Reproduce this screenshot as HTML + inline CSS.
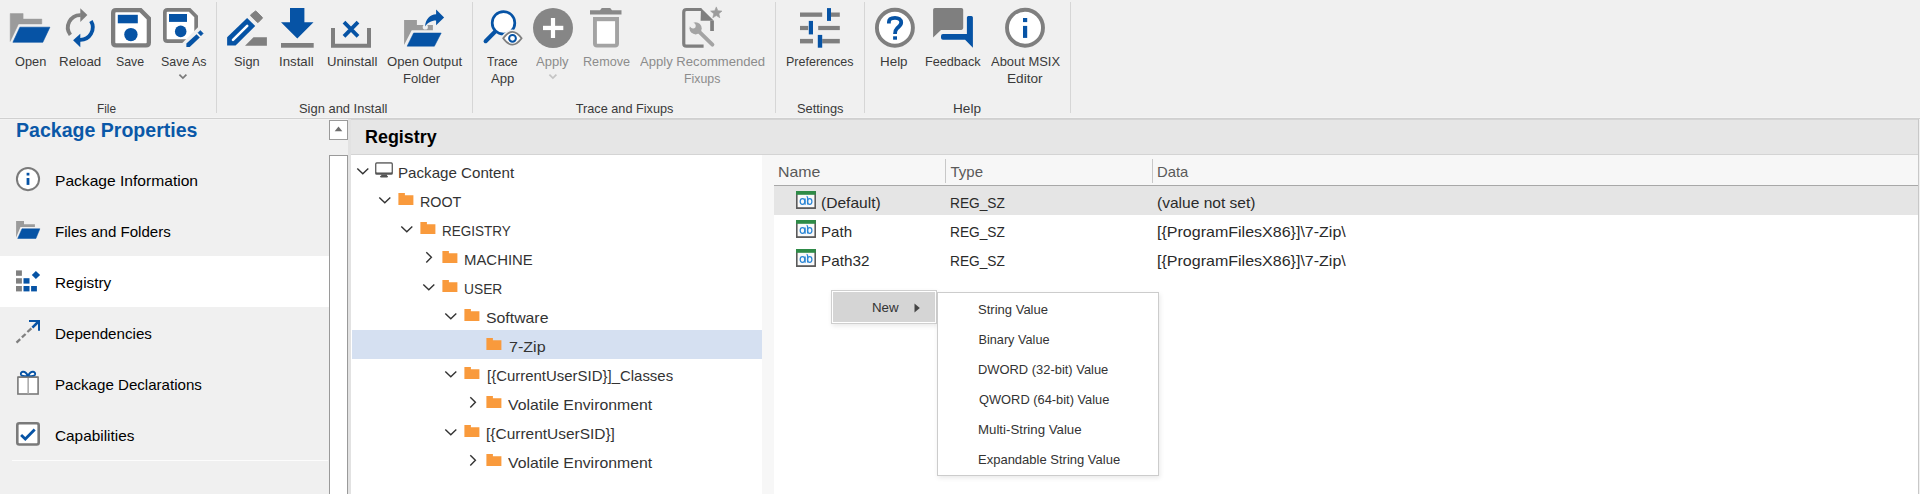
<!DOCTYPE html>
<html><head><meta charset="utf-8">
<style>
html,body{margin:0;padding:0;}
body{width:1920px;height:494px;overflow:hidden;position:relative;background:#f0f0f0;font-family:"Liberation Sans",sans-serif;}
.a{position:absolute;}
.t{position:absolute;white-space:nowrap;line-height:1;}
.rl{position:absolute;white-space:nowrap;line-height:17px;font-size:12.7px;color:#3a3a3a;text-align:center;width:200px;}
.gl{position:absolute;white-space:nowrap;line-height:1;font-size:12.7px;color:#3a3a3a;text-align:center;width:200px;}
.dis{color:#8a8a8a;}
.sep{position:absolute;top:2px;height:111px;width:1px;background:#d6d6d6;}
.nav{position:absolute;left:55.9px;font-size:15px;color:#000;line-height:1;white-space:nowrap;}
.tr{position:absolute;font-size:15px;color:#333;line-height:1;white-space:nowrap;}
.lv{position:absolute;font-size:15px;color:#1e1e1e;line-height:1;white-space:nowrap;}
.mi{position:absolute;left:42px;font-size:12.7px;color:#333;line-height:1;white-space:nowrap;}
.x{position:absolute;white-space:nowrap;line-height:1;transform-origin:0 0;}
</style></head><body>
<!-- ribbon bottom line -->
<div class="a" style="left:0;top:117px;width:1920px;height:1px;background:#f3f3f3"></div>
<div class="a" style="left:0;top:118px;width:1920px;height:1px;background:#d0d0d0"></div>
<div class="a" style="left:0;top:119px;width:1920px;height:1px;background:#f3f3f3"></div>
<!-- separators -->
<div class="sep" style="left:216px"></div>
<div class="sep" style="left:472px"></div>
<div class="sep" style="left:775px"></div>
<div class="sep" style="left:864px"></div>
<div class="sep" style="left:1070px"></div>

<!-- left panel selected row -->
<div class="a" style="left:0;top:256px;width:329px;height:51px;background:#fff"></div>
<div class="a" style="left:12px;top:460px;width:316px;height:1px;background:#fcfcfc"></div>
<!-- scrollbar -->
<div class="a" style="left:329px;top:120px;width:17px;height:18px;border:1px solid #9a9a9a;background:#fff"></div>
<div class="a" style="left:329px;top:155px;width:17px;height:400px;border:1px solid #9a9a9a;background:#fff"></div>
<div class="a" style="left:348px;top:119px;width:3px;height:375px;background:#e2e2e2"></div>
<!-- main header -->
<div class="a" style="left:351px;top:120px;width:1567px;height:34px;background:#e6e6e6"></div>
<div class="a" style="left:351px;top:119px;width:1567px;height:1px;background:#d4d4d4"></div>
<div class="a" style="left:351px;top:154px;width:1567px;height:1px;background:#d4d4d4"></div>
<!-- tree -->
<div class="a" style="left:351px;top:155px;width:411px;height:339px;background:#fff"></div>
<div class="a" style="left:352px;top:330px;width:410px;height:29px;background:#d5e0f1"></div>
<!-- splitter + list -->
<div class="a" style="left:762px;top:155px;width:1156px;height:30px;background:#f7f7f7"></div>
<div class="a" style="left:762px;top:185px;width:12px;height:309px;background:#f7f7f7"></div>
<div class="a" style="left:774px;top:185px;width:1144px;height:1px;background:#a8a8a8"></div>
<div class="a" style="left:774px;top:186px;width:1144px;height:308px;background:#fff"></div>
<div class="a" style="left:774px;top:186px;width:1144px;height:29px;background:#e5e5e5"></div>
<div class="a" style="left:945px;top:159px;width:1px;height:24px;background:#c8c8c8"></div>
<div class="a" style="left:1152px;top:159px;width:1px;height:24px;background:#c8c8c8"></div>
<div class="a" style="left:1918px;top:119px;width:1px;height:375px;background:#c8c8c8"></div>
<div class="a" style="left:1919px;top:119px;width:1px;height:375px;background:#f0f0f0"></div>

<!--ICONS-->
<svg class="a" style="left:0;top:0" width="1920" height="494" viewBox="0 0 1920 494">
<!-- Open -->
<path d="M10.2,13.6 H23.1 V19.1 H41.8 V23.9 H18.5 L10.2,41.4 Z" fill="#9b9b9b" stroke="#9b9b9b" stroke-width="0.5" stroke-linejoin="round"/>
<path d="M19.9,27.2 H49.9 L42.8,42.3 H12.9 Z" fill="#0653a5" stroke="#0653a5" stroke-width="0.6" stroke-linejoin="round"/>
<!-- Reload -->
<path d="M70.4,34.96 A12.4,12.4 0 0 1 80.8,15.1" fill="none" stroke="#7f7f7f" stroke-width="3.8"/>
<path d="M80.3,8.2 L87.4,15 L80.3,22 Z" fill="#7f7f7f"/>
<path d="M90.93,21.1 A12.4,12.4 0 0 1 79.8,39.9" fill="none" stroke="#0653a5" stroke-width="3.8"/>
<path d="M80.3,33.8 L73.1,40.3 L80.3,47.2 Z" fill="#0653a5"/>
<!-- Save -->
<path d="M116,10.15 H140.6 L148.85,18.4 V42.6 Q148.85,45.45 146,45.45 H116 Q113.15,45.45 113.15,42.6 V13 Q113.15,10.15 116,10.15 Z" fill="#fff" stroke="#7d7d7d" stroke-width="4.3"/>
<rect x="117.8" y="14.8" width="20" height="8.5" fill="#0653a5"/>
<circle cx="130.9" cy="34.6" r="6.7" fill="#0653a5"/>
<!-- Save As -->
<path d="M167.5,9.85 H189.6 L196.15,16.4 V38.6 Q196.15,41.15 193.6,41.15 H167.5 Q164.85,41.15 164.85,38.5 V12.5 Q164.85,9.85 167.5,9.85 Z" fill="#fff" stroke="#7d7d7d" stroke-width="3.7"/>
<rect x="169" y="14" width="18" height="7.9" fill="#0653a5"/>
<circle cx="180.7" cy="31.4" r="5.8" fill="#0653a5"/>
<path d="M200,25.3 V50 H175.3 Z" fill="#f0f0f0"/>
<path d="M186.4,46.9 V43.5 L196.6,34.2 L199.8,37.4 L189.7,46.9 Z" fill="#0653a5"/>
<path d="M198,32.8 L200.3,30.5 L203.2,33.4 L200.9,35.8 Z" fill="#0653a5" stroke="#0653a5" stroke-width="0.6" stroke-linejoin="round"/>
<!-- Sign -->
<path d="M227.1,45.4 V37.3 L247.1,18 L255.2,25.9 L235.6,45.4 Z" fill="#0653a5"/>
<path d="M233,39.9 L247.2,25.8" stroke="#fff" stroke-width="2.6" stroke-linecap="round"/>
<path d="M255.2,11.2 Q255.6,10.6 256.2,11.2 L262.2,17.2 Q262.8,17.8 262.2,18.4 L258.4,22.3 Q257.8,22.9 257.2,22.3 L250.8,15.9 Q250.2,15.3 250.8,14.7 Z" fill="#7f7f7f" stroke="#7f7f7f" stroke-width="0.9" stroke-linejoin="round"/>
<path d="M245,45.8 L253.5,37.2 H266.9 V45.8 Z" fill="#7f7f7f"/>
<!-- Install -->
<path d="M290,7.9 H304.4 V22.2 H313.5 L297.3,38.6 L281,22.2 H290 Z" fill="#0653a5"/>
<rect x="281" y="43" width="32.7" height="4.7" fill="#7f7f7f"/>
<!-- Uninstall -->
<path d="M333,28 V45.7 H369 V28" fill="none" stroke="#7f7f7f" stroke-width="4"/>
<path d="M344,22.1 L358,36.3 M358,22.1 L344,36.3" stroke="#0653a5" stroke-width="3.8"/>
<!-- Open Output Folder -->
<path d="M404.1,20.1 H416.9 V25 H432.9 V30.3 H411.7 L404.1,45 Z" fill="#9b9b9b"/>
<circle cx="425.3" cy="27" r="2.6" fill="#f0f0f0"/>
<path d="M425,26.5 C425.5,19 430,14.6 436.1,14.2 V9.6 L444.1,17.4 L436.1,25.2 V20.6 C431,20.6 427.5,23 425,26.5 Z" fill="#0653a5" stroke="#f0f0f0" stroke-width="1.6" paint-order="stroke"/>
<path d="M413.6,33 H441.2 L434.4,46.2 H407.1 Z" fill="#0653a5" stroke="#0653a5" stroke-width="0.5" stroke-linejoin="round"/>
<!-- Trace App -->
<path d="M496.5,30.3 L485.6,41.2" stroke="#0653a5" stroke-width="4.1" stroke-linecap="round"/>
<circle cx="503.5" cy="22.9" r="11.3" fill="#fff" stroke="#0653a5" stroke-width="2.7"/>
<path d="M503.2,38.3 Q512.4,25.5 521.6,38.3 Q512.4,51.1 503.2,38.3 Z" fill="#fff" stroke="#f0f0f0" stroke-width="5"/>
<path d="M503.2,38.3 Q512.4,25.5 521.6,38.3 Q512.4,51.1 503.2,38.3 Z" fill="#fff" stroke="#7f7f7f" stroke-width="1.8"/>
<circle cx="512.5" cy="38.3" r="3.4" fill="#fff" stroke="#0653a5" stroke-width="2"/>
<!-- Apply -->
<circle cx="553" cy="28" r="20" fill="#868686"/>
<rect x="543" y="25.8" width="20.3" height="4.3" fill="#fff"/>
<rect x="550.9" y="18" width="4.2" height="20" fill="#fff"/>
<!-- Remove -->
<path d="M590,10.3 H600 L601.8,7.9 H610.2 L612,10.3 H621.5 V14.6 H590 Z" fill="#898989"/>
<path d="M594.95,17 V43.5 Q594.95,45.65 597.1,45.65 H615 Q617.05,45.65 617.05,43.5 V17" fill="#fff" stroke="#a3a3a3" stroke-width="3.9"/>
<rect x="594.95" y="17" width="22.1" height="4.2" fill="#a3a3a3"/>
<!-- Apply Recommended Fixups -->
<path d="M703.6,46.2 H686.5 Q683.75,46.2 683.75,43.4 V12.3 Q683.75,9.5 686.5,9.5 H701.3" fill="none" stroke="#7f7f7f" stroke-width="3.2"/>
<path d="M701,7.9 L713.9,20.8 H700.6 Z" fill="#7f7f7f"/>
<rect x="710.2" y="20.8" width="3.7" height="10.2" fill="#7f7f7f"/>
<path d="M696,28.7 L712.4,44.7" stroke="#a4a4a4" stroke-width="3.9" stroke-linecap="round"/>
<circle cx="695.6" cy="28.3" r="6.1" fill="#a4a4a4"/>
<circle cx="693.1" cy="25.8" r="2.6" fill="#f0f0f0"/>
<path d="M693.1,25.8 L688,20.7" stroke="#f0f0f0" stroke-width="5.2"/>
<path d="M716.30,6.90 L717.89,10.72 L722.01,11.05 L718.87,13.73 L719.83,17.75 L716.30,15.60 L712.77,17.75 L713.73,13.73 L710.59,11.05 L714.71,10.72 Z" fill="#9c9c9c" stroke="#9c9c9c" stroke-width="0.6" stroke-linejoin="round"/>
<!-- Preferences -->
<g fill="#7f7f7f">
<rect x="800" y="12.5" width="22.2" height="4.3"/><rect x="831" y="12.5" width="8.8" height="4.3"/>
<rect x="800" y="25.9" width="8.2" height="4.2"/><rect x="818.2" y="25.9" width="21.6" height="4.2"/>
<rect x="800" y="38.9" width="13" height="4.5"/><rect x="822.2" y="38.9" width="17.6" height="4.5"/>
</g>
<g fill="#0653a5">
<rect x="827" y="8.1" width="4" height="12.8"/>
<rect x="808.8" y="20.9" width="4.2" height="13.5"/>
<rect x="817.8" y="34.9" width="4.4" height="12.8"/>
</g>
<!-- Help -->
<circle cx="894.9" cy="27.75" r="18" fill="#fff" stroke="#7f7f7f" stroke-width="3.9"/>
<path d="M888.9,23.6 V22 C888.9,18.8 891.6,17.8 895,17.8 C898.6,17.8 901.2,19.6 901.2,22.5 C901.2,25.4 898.8,26.7 897,28.3 C895.6,29.6 895,30.8 895,33.9" fill="none" stroke="#0653a5" stroke-width="3.8"/>
<rect x="893.1" y="36.3" width="3.9" height="3.4" fill="#0653a5"/>
<!-- Feedback -->
<path d="M934.9,7.9 H961.4 Q963.2,7.9 963.2,9.7 V28.1 Q963.2,29.9 961.4,29.9 H941 L933.1,37.5 V9.7 Q933.1,7.9 934.9,7.9 Z" fill="#7f7f7f"/>
<path d="M943,34 H966.9 V17.4 Q966.9,15.9 968.4,15.9 H971.4 Q972.9,15.9 972.9,17.4 V47.8 L965.1,39.8 H943 Q941,39.8 941,37.8 V36 Q941,34 943,34 Z" fill="#0653a5" stroke="#f0f0f0" stroke-width="1.5" paint-order="stroke"/>
<!-- About -->
<circle cx="1025" cy="27.75" r="18" fill="#fff" stroke="#7f7f7f" stroke-width="3.9"/>
<rect x="1023" y="18" width="4.2" height="4.1" fill="#0653a5"/>
<rect x="1023" y="25.9" width="4.2" height="12" fill="#0653a5"/>
<!-- chevrons under Save As / Apply -->
<path d="M179.4,74.6 L182.9,78.1 L186.4,74.6" fill="none" stroke="#7a7a7a" stroke-width="1.7"/>
<path d="M549.4,74.6 L552.9,78.1 L556.4,74.6" fill="none" stroke="#c4c4c4" stroke-width="1.7"/>
</svg>
<svg class="a" style="left:0;top:0" width="1920" height="494" viewBox="0 0 1920 494">
<!-- nav: info -->
<circle cx="28" cy="179.05" r="11.1" fill="#fff" stroke="#7a7a7a" stroke-width="2"/>
<rect x="26.6" y="172.8" width="2.8" height="2.7" fill="#0653a5"/>
<rect x="26.6" y="178" width="2.8" height="6.9" fill="#0653a5"/>
<!-- nav: files -->
<path d="M16.1,221 H24 V224.2 H34.9 V227 H20.5 L16.1,237.6 Z" fill="#9b9b9b"/>
<path d="M22,228.8 H39.9 L35.9,238.5 H17.7 Z" fill="#0653a5" stroke="#0653a5" stroke-width="0.5" stroke-linejoin="round"/>
<!-- nav: registry -->
<g fill="#808080"><rect x="16" y="270.4" width="5.9" height="5.4"/><rect x="16" y="278.2" width="5.9" height="5.4"/><rect x="16" y="286" width="5.9" height="5.4"/></g>
<g fill="#0653a5"><rect x="23.5" y="278.2" width="6" height="5.4"/><rect x="23.5" y="286" width="6" height="5.4"/><rect x="31.1" y="286" width="5.8" height="5.4"/>
<path d="M35.9,271.1 L40.1,275.1 L35.9,279 L31.8,275.1 Z"/></g>
<!-- nav: dependencies -->
<path d="M29,321 H39 V330.8" fill="none" stroke="#0653a5" stroke-width="2"/>
<path d="M39,321 L32.4,327.6" stroke="#0653a5" stroke-width="2.6"/>
<g stroke="#7f7f7f" stroke-width="2.3"><path d="M27.4,332 L31.4,328.3"/><path d="M21.9,337.4 L25.6,334"/><path d="M16.5,342.6 L20.2,339.2"/></g>
<!-- nav: package declarations -->
<rect x="17.9" y="377.2" width="20.2" height="16.8" fill="#fff" stroke="#7a7a7a" stroke-width="1.6"/>
<rect x="27.4" y="377.2" width="1.5" height="16.8" fill="#a8a8a8"/>
<path d="M28,376.2 C26.6,373 24.6,371.6 22.8,371.8 C21.2,372 20.6,373.4 21,374.6 C21.5,375.9 24,376.3 28,376.2 Z" fill="#fff" stroke="#0653a5" stroke-width="1.9" stroke-linejoin="round"/>
<path d="M28,376.2 C29.4,373 31.4,371.6 33.2,371.8 C34.8,372 35.4,373.4 35,374.6 C34.5,375.9 32,376.3 28,376.2 Z" fill="#fff" stroke="#0653a5" stroke-width="1.9" stroke-linejoin="round"/>
<rect x="17.9" y="376.4" width="20.2" height="1.6" fill="#7a7a7a"/>
<!-- nav: capabilities -->
<rect x="17.3" y="423.3" width="21.4" height="21.2" rx="2" fill="#fff" stroke="#7a7a7a" stroke-width="2.6"/>
<path d="M21.1,435 L25.3,439 L34.7,429.5" fill="none" stroke="#0653a5" stroke-width="2.8"/>
<!-- scroll up arrow -->
<path d="M334.7,131.2 L338.5,126.4 L342.3,131.2 Z" fill="#6d6d6d"/>
<!-- tree: monitor -->
<g fill="#555">
<path d="M376.7,162.3 H391.3 Q392.9,162.3 392.9,163.9 V173.2 Q392.9,174.8 391.3,174.8 H376.7 Q375.1,174.8 375.1,173.2 V163.9 Q375.1,162.3 376.7,162.3 Z M376.6,163.8 V172.3 H391.4 V163.8 Z" fill-rule="evenodd"/>
<rect x="381.2" y="174.5" width="5.8" height="1.5"/>
<rect x="380" y="175.7" width="8" height="1.7" rx="0.8"/>
</g>
<path d="M376.6,163.8 V172.3 H391.4 V163.8 Z" fill="#fff"/>
<g fill="none" stroke="#333" stroke-width="1.4">
<path d="M357.30,168.50 L362.80,173.80 L368.30,168.50"/>
<path d="M379.30,197.50 L384.80,202.80 L390.30,197.50"/>
<path d="M401.30,226.50 L406.80,231.80 L412.30,226.50"/>
<path d="M423.30,284.50 L428.80,289.80 L434.30,284.50"/>
<path d="M445.30,313.50 L450.80,318.80 L456.30,313.50"/>
<path d="M445.30,371.50 L450.80,376.80 L456.30,371.50"/>
<path d="M445.30,429.50 L450.80,434.80 L456.30,429.50"/>
<path d="M426.30,252.25 L431.40,257.35 L426.30,262.45"/>
<path d="M470.30,397.25 L475.40,402.35 L470.30,407.45"/>
<path d="M470.30,455.25 L475.40,460.35 L470.30,465.45"/>
</g>
<g fill="#f99a3c">
<path id="fd" d="M398.4,192.9 H404.9 V195.3 H413.4 V204.9 H398.4 Z"/>
<use href="#fd" x="22" y="29.00"/>
<use href="#fd" x="44" y="58.00"/>
<use href="#fd" x="44" y="87.00"/>
<use href="#fd" x="66" y="116.00"/>
<use href="#fd" x="88" y="145.00"/>
<use href="#fd" x="66" y="174.00"/>
<use href="#fd" x="88" y="203.00"/>
<use href="#fd" x="66" y="232.00"/>
<use href="#fd" x="88" y="261.00"/>
</g>
<!-- list icons -->
<g id="ab">
<rect x="796.8" y="191.8" width="18.4" height="16.2" fill="#f9f9f9" stroke="#5a5a5a" stroke-width="1.6"/>
<rect x="796" y="208" width="19.8" height="0.9" fill="#5a5a5a"/>
<rect x="796" y="191" width="19.8" height="3.8" fill="#2e8b47"/>
<g fill="none" stroke="#2a86d6" stroke-width="1.25">
<ellipse cx="802.5" cy="201.5" rx="2.3" ry="2.8"/>
<path d="M805.1,198.4 V204.8"/>
<path d="M806.6,196.4 Q807.6,196.6 807.6,197.8 V204.6"/>
<ellipse cx="809.7" cy="201.5" rx="2.2" ry="2.8"/>
</g>
</g>
<use href="#ab" y="29"/>
<use href="#ab" y="58"/>
</svg>
<!--/ICONS-->
<div class="x" style="left:14.78px;top:55.75px;font-size:12.7px;color:#3a3a3a;transform:scaleX(1.0075)">Open</div>
<div class="x" style="left:58.86px;top:55.75px;font-size:12.7px;color:#3a3a3a;transform:scaleX(1.0514)">Reload</div>
<div class="x" style="left:116.03px;top:55.75px;font-size:12.7px;color:#3a3a3a;transform:scaleX(0.9719)">Save</div>
<div class="x" style="left:160.70px;top:55.75px;font-size:12.7px;color:#3a3a3a;transform:scaleX(0.9783)">Save As</div>
<div class="x" style="left:233.59px;top:55.75px;font-size:12.7px;color:#3a3a3a;transform:scaleX(1.0084)">Sign</div>
<div class="x" style="left:278.96px;top:55.75px;font-size:12.7px;color:#3a3a3a;transform:scaleX(1.0442)">Install</div>
<div class="x" style="left:326.57px;top:55.75px;font-size:12.7px;color:#3a3a3a;transform:scaleX(1.0341)">Uninstall</div>
<div class="x" style="left:386.78px;top:55.75px;font-size:12.7px;color:#3a3a3a;transform:scaleX(1.0335)">Open Output</div>
<div class="x" style="left:403.37px;top:72.55px;font-size:12.7px;color:#3a3a3a;transform:scaleX(1.0336)">Folder</div>
<div class="x" style="left:487.48px;top:55.75px;font-size:12.7px;color:#3a3a3a;transform:scaleX(0.9563)">Trace</div>
<div class="x" style="left:490.90px;top:72.55px;font-size:12.7px;color:#3a3a3a;transform:scaleX(1.0351)">App</div>
<div class="x" style="left:535.91px;top:55.75px;font-size:12.7px;color:#8c8c8c;transform:scaleX(1.0250)">Apply</div>
<div class="x" style="left:582.90px;top:55.75px;font-size:12.7px;color:#8c8c8c;transform:scaleX(0.9957)">Remove</div>
<div class="x" style="left:639.91px;top:55.75px;font-size:12.7px;color:#8c8c8c;transform:scaleX(1.0314)">Apply Recommended</div>
<div class="x" style="left:683.62px;top:72.55px;font-size:12.7px;color:#8c8c8c;transform:scaleX(0.9724)">Fixups</div>
<div class="x" style="left:785.91px;top:55.75px;font-size:12.7px;color:#3a3a3a;transform:scaleX(0.9853)">Preferences</div>
<div class="x" style="left:879.86px;top:55.75px;font-size:12.7px;color:#3a3a3a;transform:scaleX(1.0561)">Help</div>
<div class="x" style="left:924.90px;top:55.75px;font-size:12.7px;color:#3a3a3a">Feedback</div>
<div class="x" style="left:990.90px;top:55.75px;font-size:12.7px;color:#3a3a3a;transform:scaleX(1.0207)">About MSIX</div>
<div class="x" style="left:1006.82px;top:72.55px;font-size:12.7px;color:#3a3a3a;transform:scaleX(1.0740)">Editor</div>
<div class="x" style="left:97.21px;top:103.05px;font-size:12.7px;color:#3a3a3a;transform:scaleX(0.9319)">File</div>
<div class="x" style="left:299.19px;top:103.05px;font-size:12.7px;color:#3a3a3a;transform:scaleX(1.0186)">Sign and Install</div>
<div class="x" style="left:575.80px;top:103.05px;font-size:12.7px;color:#3a3a3a">Trace and Fixups</div>
<div class="x" style="left:796.59px;top:103.05px;font-size:12.7px;color:#3a3a3a;transform:scaleX(1.0134)">Settings</div>
<div class="x" style="left:953.24px;top:103.05px;font-size:12.7px;color:#3a3a3a;transform:scaleX(1.0722)">Help</div>
<div class="x" style="left:16.38px;top:120.66px;font-size:19.3px;color:#0a58a8;font-weight:bold;transform:scaleX(1.0136)">Package Properties</div>
<div class="x" style="left:55.05px;top:173.10px;font-size:15px;color:#000;transform:scaleX(1.0397)">Package Information</div>
<div class="x" style="left:54.99px;top:224.30px;font-size:15px;color:#000;transform:scaleX(1.0070)">Files and Folders</div>
<div class="x" style="left:54.98px;top:274.90px;font-size:15px;color:#000;transform:scaleX(1.0223)">Registry</div>
<div class="x" style="left:55.09px;top:326.20px;font-size:15px;color:#000;transform:scaleX(1.0106)">Dependencies</div>
<div class="x" style="left:55.09px;top:377.10px;font-size:15px;color:#000;transform:scaleX(1.0069)">Package Declarations</div>
<div class="x" style="left:55.40px;top:428.30px;font-size:15px;color:#000;transform:scaleX(1.0234)">Capabilities</div>
<div class="x" style="left:364.79px;top:128.89px;font-size:17.5px;color:#000;font-weight:bold;transform:scaleX(1.0229)">Registry</div>
<div class="x" style="left:397.79px;top:165.20px;font-size:15px;color:#333;transform:scaleX(1.0088)">Package Content</div>
<div class="x" style="left:419.92px;top:194.20px;font-size:15px;color:#333;transform:scaleX(0.9536)">ROOT</div>
<div class="x" style="left:441.53px;top:223.20px;font-size:15px;color:#333;transform:scaleX(0.8992)">REGISTRY</div>
<div class="x" style="left:464.01px;top:252.20px;font-size:15px;color:#333;transform:scaleX(0.9941)">MACHINE</div>
<div class="x" style="left:463.50px;top:281.20px;font-size:15px;color:#333;transform:scaleX(0.9200)">USER</div>
<div class="x" style="left:486.08px;top:310.20px;font-size:15px;color:#333;transform:scaleX(1.0546)">Software</div>
<div class="x" style="left:509.00px;top:339.20px;font-size:15px;color:#333;transform:scaleX(1.0710)">7-Zip</div>
<div class="x" style="left:486.70px;top:368.20px;font-size:15px;color:#333;transform:scaleX(0.9968)">[{CurrentUserSID}]_Classes</div>
<div class="x" style="left:508.39px;top:397.20px;font-size:15px;color:#333;transform:scaleX(1.0540)">Volatile Environment</div>
<div class="x" style="left:485.67px;top:426.20px;font-size:15px;color:#333;transform:scaleX(1.0309)">[{CurrentUserSID}]</div>
<div class="x" style="left:508.39px;top:455.20px;font-size:15px;color:#333;transform:scaleX(1.0540)">Volatile Environment</div>
<div class="x" style="left:778.17px;top:163.90px;font-size:15px;color:#5a5a5a;transform:scaleX(1.0606)">Name</div>
<div class="x" style="left:950.49px;top:163.90px;font-size:15px;color:#5a5a5a">Type</div>
<div class="x" style="left:1157.31px;top:163.90px;font-size:15px;color:#5a5a5a;transform:scaleX(0.9872)">Data</div>
<div class="x" style="left:820.98px;top:194.90px;font-size:15px;color:#2a2a2a;transform:scaleX(1.0393)">(Default)</div>
<div class="x" style="left:949.55px;top:194.90px;font-size:15px;color:#2a2a2a;transform:scaleX(0.9139)">REG_SZ</div>
<div class="x" style="left:1157.27px;top:194.90px;font-size:15px;color:#2a2a2a;transform:scaleX(1.0362)">(value not set)</div>
<div class="x" style="left:820.99px;top:223.90px;font-size:15px;color:#2a2a2a;transform:scaleX(1.0069)">Path</div>
<div class="x" style="left:949.55px;top:223.90px;font-size:15px;color:#2a2a2a;transform:scaleX(0.9139)">REG_SZ</div>
<div class="x" style="left:1157.24px;top:223.90px;font-size:15px;color:#2a2a2a;transform:scaleX(1.0682)">[{ProgramFilesX86}]\7-Zip\</div>
<div class="x" style="left:820.98px;top:252.90px;font-size:15px;color:#2a2a2a;transform:scaleX(1.0176)">Path32</div>
<div class="x" style="left:949.55px;top:252.90px;font-size:15px;color:#2a2a2a;transform:scaleX(0.9139)">REG_SZ</div>
<div class="x" style="left:1157.24px;top:252.90px;font-size:15px;color:#2a2a2a;transform:scaleX(1.0682)">[{ProgramFilesX86}]\7-Zip\</div>
<!-- context menu -->
<div class="a" style="left:831px;top:290px;width:104px;height:32px;border:1px solid #cfcfcf;background:#fff;box-shadow:1px 2px 5px rgba(0,0,0,0.09)">
  <div class="a" style="left:1px;top:1px;width:102px;height:30px;background:#d5d5d5"></div>
  <svg class="a" style="left:82px;top:12px" width="7" height="10"><path d="M0.5 0.5 L5.8 5 L0.5 9.5 Z" fill="#444"/></svg>
</div>
<div class="a" style="left:937px;top:292px;width:220px;height:182px;border:1px solid #cccccc;background:#fff;box-shadow:1px 2px 5px rgba(0,0,0,0.09)"></div>

<div class="x" style="left:872.16px;top:302.15px;font-size:12.7px;color:#333;transform:scaleX(1.0486)">New</div>
<div class="x" style="left:978.49px;top:303.65px;font-size:12.7px;color:#333;transform:scaleX(1.0269)">String Value</div>
<div class="x" style="left:978.50px;top:333.65px;font-size:12.7px;color:#333">Binary Value</div>
<div class="x" style="left:978.49px;top:363.65px;font-size:12.7px;color:#333;transform:scaleX(1.0173)">DWORD (32-bit) Value</div>
<div class="x" style="left:979.49px;top:393.65px;font-size:12.7px;color:#333;transform:scaleX(1.0125)">QWORD (64-bit) Value</div>
<div class="x" style="left:978.47px;top:423.65px;font-size:12.7px;color:#333;transform:scaleX(1.0445)">Multi-String Value</div>
<div class="x" style="left:978.49px;top:453.65px;font-size:12.7px;color:#333;transform:scaleX(1.0247)">Expandable String Value</div>
</body></html>
